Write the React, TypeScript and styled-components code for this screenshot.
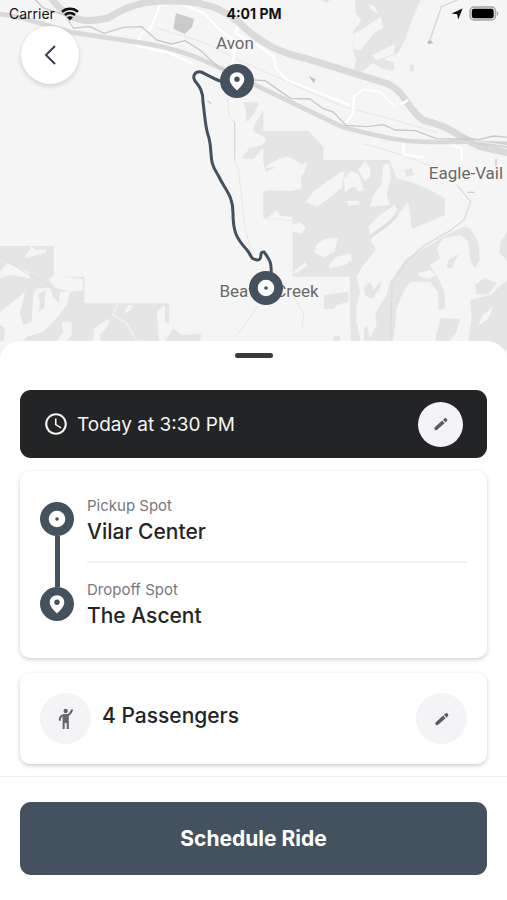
import React from 'react';
import styled, { createGlobalStyle } from 'styled-components';
import { MdAccessTime } from 'react-icons/md';

const color = {
  slate: '#44515e',
  ink: '#232425',
  muted: '#77787d',
  soft: '#f4f4f7',
  line: '#f1f1f2',
  land: '#f5f5f5',
  forest: '#e5e5e5',
  road: '#d9d9d9',
};

const GlobalStyle = createGlobalStyle`
  *, *::before, *::after { box-sizing: border-box; }
  body {
    margin: 0;
    background: #fff;
    color: ${color.ink};
    font-family: Inter, "Liberation Sans", sans-serif;
  }
  button { font: inherit; color: inherit; border: 0; padding: 0; cursor: pointer; }
  h2, p { margin: 0; }
`;

const Screen = styled.div`
  display: flex;
  flex-direction: column;
  min-height: 100vh;
`;

const MapArea = styled.header`
  position: relative;
  height: 365px;
  overflow: hidden;
  background: ${color.land};
`;

const MapCanvas = styled.svg`
  position: absolute;
  inset: 0;
  width: 100%;
  height: 100%;
`;

const StatusBar = styled.div`
  position: relative;
  display: grid;
  grid-template-columns: 1fr auto 1fr;
  align-items: center;
  height: 26px;
  padding: 1px 8px 0 9px;
  color: #111;
  font-size: 14px;
  line-height: 20px;
`;

const StatusGroup = styled.div<{ $end?: boolean }>`
  display: flex;
  align-items: center;
  justify-content: ${(p) => (p.$end ? 'flex-end' : 'flex-start')};
  gap: 6px;
`;

const Clock = styled.time`
  font-weight: 700;
`;

const BackButton = styled.button`
  position: relative;
  display: grid;
  place-items: center;
  width: 58px;
  height: 58px;
  margin: 0 0 0 21px;
  border-radius: 50%;
  background: #fff;
  box-shadow: 0 2px 5px rgba(0, 0, 0, 0.16);
`;

const Sheet = styled.main`
  position: relative;
  display: flex;
  flex-direction: column;
  flex: 1;
  margin-top: -24px;
  padding: 12px 20px;
  border-radius: 20px 20px 0 0;
  background: #fff;
`;

const Handle = styled.div`
  align-self: center;
  width: 38px;
  height: 5px;
  margin-bottom: 32px;
  border-radius: 3px;
  background: #3a3a3b;
`;

const TimeBar = styled.section`
  display: flex;
  align-items: center;
  gap: 8px;
  height: 68px;
  margin-bottom: 13px;
  padding: 0 24px 0 23px;
  border-radius: 11px;
  background: ${color.ink};
  color: #f4f4f4;
  font-size: 19px;
`;

const Grow = styled.span`
  flex: 1;
`;

const RoundButton = styled.button<{ $size: number }>`
  display: grid;
  place-items: center;
  width: ${(p) => p.$size}px;
  height: ${(p) => p.$size}px;
  border-radius: 50%;
  background: ${color.soft};
`;

const Card = styled.section`
  border-radius: 10px;
  background: #fff;
  box-shadow: 0 2px 4px rgba(0, 0, 0, 0.17), 0 0 5px rgba(0, 0, 0, 0.04);
`;

const RouteCard = styled(Card)`
  display: grid;
  grid-template-columns: 34px 1fr;
  column-gap: 13px;
  height: 187px;
  margin-bottom: 15px;
  padding: 24px 20px 0;
`;

const Track = styled.div`
  display: flex;
  flex-direction: column;
  align-items: center;
  padding-top: 7px;
`;

const TrackLine = styled.div`
  width: 5px;
  height: 51px;
  background: ${color.slate};
`;

const Stop = styled.div<{ $divided?: boolean }>`
  height: ${(p) => (p.$divided ? 68 : 60)}px;
  margin-bottom: 16px;
  border-bottom: ${(p) => (p.$divided ? `2px solid ${color.line}` : '0')};
`;

const StopLabel = styled.p`
  color: ${color.muted};
  font-size: 15px;
  line-height: 22px;
`;

const StopName = styled.h2`
  font-size: 21px;
  font-weight: 500;
  line-height: 30px;
`;

const PassengerCard = styled(Card)`
  display: flex;
  align-items: center;
  gap: 11px;
  height: 91px;
  padding: 0 20px;
`;

const PassengerBadge = styled.span`
  display: grid;
  place-items: center;
  width: 51px;
  height: 51px;
  border-radius: 50%;
  background: ${color.soft};
`;

const PassengerCount = styled.h2`
  flex: 1;
  padding-bottom: 5px;
  font-size: 21px;
  font-weight: 500;
  line-height: 30px;
`;

const Footer = styled.footer`
  padding: 25px 20px;
  border-top: 1px solid ${color.line};
  background: #fff;
`;

const ScheduleButton = styled.button`
  width: 100%;
  height: 73px;
  border-radius: 11px;
  background: ${color.slate};
  color: #fff;
  font-size: 21px;
  font-weight: 700;
`;

/* Both markers are drawn in a 34-unit box. */
const OriginShape = () => (
  <>
    <circle cx="17" cy="17" r="17" fill={color.slate} />
    <circle cx="17" cy="17" r="8.3" fill="#fff" />
    <circle cx="17" cy="17" r="1.8" fill={color.slate} />
  </>
);

const PinShape = () => (
  <>
    <circle cx="17" cy="17" r="17" fill={color.slate} />
    <path
      d="M17 8.2c-4.1 0-7.3 3.1-7.3 7.1 0 4.7 5.1 9 7.3 11.2 2.2-2.2 7.3-6.5 7.3-11.2 0-4-3.2-7.1-7.3-7.1z"
      fill="#fff"
    />
    <circle cx="17" cy="15.2" r="2.7" fill={color.slate} />
  </>
);

const Marker = ({ kind }: { kind: 'origin' | 'pin' }) => (
  <svg width="34" height="34" viewBox="0 0 34 34" aria-hidden="true">
    {kind === 'origin' ? <OriginShape /> : <PinShape />}
  </svg>
);

const PencilIcon = () => (
  <svg width="18" height="18" viewBox="0 0 18 18" aria-hidden="true">
    <g transform="rotate(-42 9 9)" fill="#5b5b60">
      <path d="M2.600 7.200h9.600v3.600H2.600L.8 10.200V7.800z" />
      <path d="M13.300 7.200h1.900a1.500 1.500 0 0 1 1.500 1.500v.6a1.500 1.500 0 0 1-1.500 1.500h-1.900z" />
    </g>
  </svg>
);

const PersonIcon = () => (
  <svg width="16" height="22" viewBox="0 0 16 22" aria-hidden="true">
    <circle cx="7.7" cy="3" r="2.2" fill="#66666b" />
    <path
      d="M14 2.200C13 4.900 11.500 6.700 9.400 7.200H6C3.500 7.300 1.900 8.700 1.800 12"
      fill="none"
      stroke="#66666b"
      strokeWidth="2"
      strokeLinecap="round"
    />
    <path d="M4.600 6.200h6.200V21H8.700v-6H6.700v6H4.600z" fill="#66666b" />
  </svg>
);

const WifiIcon = () => (
  <svg width="18" height="14" viewBox="0 0 18 14" fill="none" stroke="#111" aria-hidden="true">
    <path d="M1 4.800C5.500.7 12.500.7 17 4.800" strokeWidth="2.5" />
    <path d="M3.900 8C6.800 5.300 11.200 5.300 14.100 8" strokeWidth="2.4" />
    <path d="M9 13.400L6 10.300c1.700-1.500 4.300-1.500 6 0z" fill="#111" stroke="none" />
  </svg>
);

const LocationIcon = () => (
  <svg width="12" height="12" viewBox="0 0 12 12" aria-hidden="true">
    <path d="M11.600.5L7.200 11.600 6.200 6.300.6 5.400z" fill="#111" />
  </svg>
);

const BatteryIcon = () => (
  <svg width="30" height="15" viewBox="0 0 30 15" aria-hidden="true">
    <rect x="1" y="1" width="25.5" height="13" rx="3.8" fill="#e4e4e4" stroke="#a5a5a5" strokeWidth="1.3" />
    <rect x="2.8" y="2.8" width="21.9" height="9.4" rx="2.2" fill="#000" />
    <path d="M27.800 5.200c2 .7 2 3.900 0 4.600z" fill="#a5a5a5" />
  </svg>
);

interface TerrainProps {
  x: number;
  y: number;
  forests: string[];
  clearings: string[];
  groves?: string[];
}

/* Forest first, then the clearings cut out of it, then groves inside the clearings. */
const Terrain = ({ x, y, forests, clearings, groves = [] }: TerrainProps) => (
  <g transform={`translate(${x} ${y})`}>
    <path d={forests.join('')} fill={color.forest} />
    <path d={clearings.join('')} fill={color.land} />
    <path d={groves.join('')} fill={color.forest} />
  </g>
);

const north: TerrainProps = {
  x: 965,
  y: 0,
  forests: [
    'M100 0H297L271 60 251 118 229 160 185 178 217 186V212L185 208 153 188 125 214H97L103 178 95 160V92L119 62 101 36z',
    'M0 0H27L13 8z',
    'M264 196L276 190V214H264z',
  ],
  clearings: [
    'M95 102L128 84 177 50 185 84 156 100 117 152 97 148z',
    'M151 166L221 132 215 164 163 180z',
    'M140 10L160 20 168 42 150 30z',
  ],
};

const southEast: TerrainProps = {
  x: 690,
  y: 285,
  forests: [
    'M42 22H88L70 60 48 82V50z',
    'M35 190L58 160 100 148 108 130 70 108 72 92 100 45V108H235L280 155V195H478L500 250 545 262 600 285 645 310V360L555 398H545L535 320 480 390 420 432 438 465 400 510 380 545H188V378L100 370V290L118 285 100 200V158L70 192z',
    'M360 545H380L390 590 378 640 380 690H360V590z',
    'M282 600L355 590V620L320 630 310 642H282z',
    'M402 575L420 560 432 585 455 552 450 580 425 612 405 600z',
    'M362 690H382L392 737H362zM402 700L412 690 420 737H402zM310 722H330V737H310z',
    'M435 655L470 600 480 560 530 490 600 450 640 425 700 395 720 400 745 440 750 495 735 520 722 500 715 440 690 420 640 430 620 460 632 490 600 510 630 560 645 600V640L625 645V590L600 560 540 560 520 590 500 640 490 737H415L440 690z',
    'M632 668L690 672 680 710 660 737H615z',
    'M735 570L765 548 800 565 775 598H740z',
    'M831 555L780 600 720 615 725 670 715 737H762L840 770V555z',
    'M831 410L812 440 808 470 831 500z',
  ],
  clearings: [
    'M100 235L140 216 105 218 115 208 150 190 175 185 215 208 232 202 222 235 212 245 216 280 185 288 100 285z',
    'M228 320L250 290 330 232 345 228 335 280 262 335z',
    'M342 250L365 228 385 238 402 285 385 290 375 275 360 278 345 295z',
    'M350 318L385 318 390 328 355 332z',
    'M385 225L405 198 420 220V245L405 258z',
    'M430 300L455 265 460 210 478 205 482 250 470 300 480 330 420 335z',
    'M415 395L450 360 495 330 502 345 480 375 420 418z',
    'M188 390L210 380 228 398 215 415 188 412z',
    'M252 470L262 445 290 430 325 430 312 470 280 488z',
    'M298 510L320 485 362 475 365 495 345 510 300 520z',
    'M190 532L225 502 232 512 200 535z',
    'M112 370L140 345 150 362 188 366V376z',
    'M562 535L600 525 618 540 600 552 570 545z',
    'M745 690L758 660 792 632 772 675z',
  ],
  groves: ['M650 520L655 495 685 478 665 520zM524 225L545 220 552 240 530 245zM360 290L372 278 385 290z'],
};

const southWest: TerrainProps = {
  x: 0,
  y: 720,
  forests: ['M0 18H162V110H253V190H508V250H495V302H0z', 'M495 302L520 265 545 285 605 280 600 302z'],
  clearings: [
    'M72 55L95 18 105 30 138 28V38L100 48z',
    'M0 95L20 70 85 95 90 115 30 105 0 115z',
    'M148 118L162 105 205 112 248 116 250 150 210 155 165 143z',
    'M0 215L40 185 75 155 60 220 70 255 95 245 100 160 110 145 150 145 160 170 175 190 180 155H210L200 195 165 240 130 275 80 290 60 310H10L15 265 0 255z',
    'M185 245H215V285L195 310H165L190 275z',
    'M278 310L282 265 330 235 325 255 300 285 305 310z',
    'M372 220L385 195H400L390 212z',
    'M470 215L495 195V250L520 265 495 302 478 310z',
  ],
  groves: ['M114 162L138 150 132 205 115 215 120 185z', 'M0 185L25 160 10 190z'],
};

const freewayPath =
  'M150 -10C215 80 270 64 325 54C390 12 450 -2 540 4C640 8 690 40 735 84C790 134 840 158 920 176L1165 252C1220 280 1222 330 1272 362C1340 372 1372 408 1440 440L1530 460';
const highwayPath = 'M-5 42C70 48 130 76 220 98L420 128C570 148 660 206 760 252L1030 382C1170 418 1220 432 1400 424L1530 438';
const riverPath =
  'M102 -5L130 24 195 45 220 84 270 80 312 100 370 82 425 80 470 120 515 132 555 122 600 150 655 202 760 240 795 242 872 295 930 297 970 326 1000 336 1038 376 1100 380 1150 374 1185 390 1245 392 1310 416 1440 418 1480 408 1530 412';

const TownMap = () => (
  <MapCanvas viewBox="0 0 507 365" preserveAspectRatio="xMidYMin slice" role="img" aria-label="Route map from Beaver Creek to Avon">
    <g transform="scale(.333333)" fill="none" strokeLinejoin="round" strokeLinecap="round">
      <rect width="1521" height="1095" fill={color.land} />
      <Terrain {...north} />
      <Terrain {...southEast} />
      <Terrain {...southWest} />
      <g stroke="#e6e6e6" strokeWidth="3">
        <path d="M682 290L688 350 704 370V480L716 510 736 690 762 780" />
        <path d="M772 920L745 960 710 1005M880 890L912 940 906 985" />
        <path d="M470 84L620 130 720 182 1030 320 1190 362 1310 398" />
        <path d="M1095 432L1190 460 1250 482 1300 500" />
      </g>
      <path d="M704 366V476M1372 556L1412 605 1392 660 1350 692 1268 740 1220 784 1176 850 1172 1025M1190 650L1110 715" stroke="#dcdcdc" strokeWidth="4" />
      <path d="M0 765L60 808 150 858" stroke="#dedede" strokeWidth="3" />
      <path d="M352 912L338 944 380 970 408 1020" stroke="#f1f1f1" strokeWidth="5" />
      <g stroke="#fff" strokeWidth="7">
        <path d="M410 136L425 100 452 84 480 16 530 8 610 38 660 90 708 128 696 200M710 84L708 100 780 140 822 170 828 204 860 240 1046 314" />
        <path d="M410 138L505 158 575 190M1034 372L1058 344 1062 290 1090 268 1140 276 1185 320" />
        <path d="M1210 424V464L1270 472M1350 432L1386 446 1384 476" />
      </g>
      <path d={freewayPath} stroke="#dadada" strokeWidth="21" />
      <path d={highwayPath} stroke={color.road} strokeWidth="14" />
      <path d="M1390 412L1440 430 1530 432" stroke="#d4d4d4" strokeWidth="15" />
      <path d="M1425 423L1530 438" stroke="#f1f1f1" strokeWidth="3" />
      <path d="M1204 312L1222 302" stroke="#fff" strokeWidth="8" />
      <path d={riverPath} stroke="#c9c9c9" strokeWidth="4" />
      <path d="M528 40L582 56 576 82 554 102 520 86z" fill="#cacaca" />
      <path d="M926 228L946 238 942 250zM1282 126l8-8 10 12-16 2z" fill="#bdbdbd" />
      <path d="M1372 0L1324 20 1290 120" stroke="#d6d6d6" strokeWidth="4" />
      <path d="M1488 478V500M1404 577H1422M624 304L632 310" stroke="#cacaca" strokeWidth="4" />
    </g>
    <path
      d="M220 81C212 78 206 74 201 72C195 71 192 76 195 81C199 86 203 90 203 102C205 116 205 128 209 138C213 155 208 160 218 175C225 190 233 195 233 213C233 231 236 238 247 250C252 256 250 259 257 260C264 260 258 251 264 252C270 260 272 263 271 275"
      fill="none"
      stroke={color.slate}
      strokeWidth="3"
      strokeLinecap="round"
    />
    <g fill="#686868" stroke="#f8f8f8" strokeWidth="2" paintOrder="stroke" fontSize="17" fontFamily='Roboto, "Liberation Sans", sans-serif' textAnchor="middle">
      <text x="235" y="49">Avon</text>
      <text x="466" y="179">Eagle-Vail</text>
      <text x="269" y="297">Beaver Creek</text>
    </g>
    <g transform="translate(220 64)">
      <PinShape />
    </g>
    <g transform="translate(249 271)">
      <OriginShape />
    </g>
  </MapCanvas>
);

export default function App() {
  return (
    <Screen>
      <GlobalStyle />
      <MapArea>
        <TownMap />
        <StatusBar>
          <StatusGroup>
            <span>Carrier</span>
            <WifiIcon />
          </StatusGroup>
          <Clock>4:01 PM</Clock>
          <StatusGroup $end>
            <LocationIcon />
            <BatteryIcon />
          </StatusGroup>
        </StatusBar>
        <BackButton type="button" aria-label="Back">
          <svg width="24" height="24" viewBox="0 0 24 24" fill="none" stroke="#38404a" strokeWidth="2" aria-hidden="true">
            <path d="M17 3L8 12l9 9" />
          </svg>
        </BackButton>
      </MapArea>
      <Sheet>
        <Handle />
        <TimeBar>
          <MdAccessTime size={26} aria-hidden="true" />
          <Grow>Today at 3:30 PM</Grow>
          <RoundButton type="button" $size={45} aria-label="Edit time">
            <PencilIcon />
          </RoundButton>
        </TimeBar>
        <RouteCard>
          <Track>
            <Marker kind="origin" />
            <TrackLine />
            <Marker kind="pin" />
          </Track>
          <div>
            <Stop $divided>
              <StopLabel>Pickup Spot</StopLabel>
              <StopName>Vilar Center</StopName>
            </Stop>
            <Stop>
              <StopLabel>Dropoff Spot</StopLabel>
              <StopName>The Ascent</StopName>
            </Stop>
          </div>
        </RouteCard>
        <PassengerCard>
          <PassengerBadge>
            <PersonIcon />
          </PassengerBadge>
          <PassengerCount>4 Passengers</PassengerCount>
          <RoundButton type="button" $size={51} aria-label="Edit passengers">
            <PencilIcon />
          </RoundButton>
        </PassengerCard>
      </Sheet>
      <Footer>
        <ScheduleButton type="button">Schedule Ride</ScheduleButton>
      </Footer>
    </Screen>
  );
}
